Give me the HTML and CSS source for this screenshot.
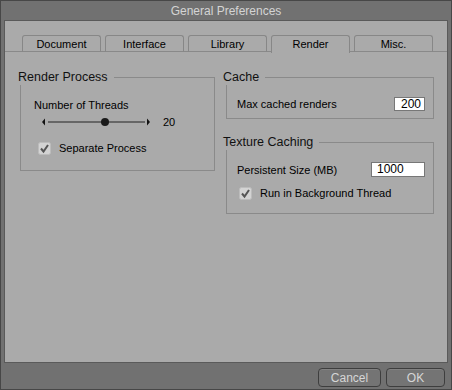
FILE: index.html
```html
<!DOCTYPE html>
<html lang="en">
<head>
    <meta charset="UTF-8">
    <title>General Preferences</title>
    <link rel="stylesheet" href="styles.css">
</head>
<body>
    <div class="window">
        <div class="titlebar">General Preferences</div>

        <div class="panel">
            <ul class="tabs">
                <li class="tab">Document</li>
                <li class="tab">Interface</li>
                <li class="tab">Library</li>
                <li class="tab active">Render</li>
                <li class="tab">Misc.</li>
            </ul>

            <div class="content">
                <!-- Left column -->
                <div class="column left">
                    <div class="group">
                        <div class="group-head">
                            <span class="group-title">Render Process</span>
                            <span class="group-rule"></span>
                        </div>
                        <div class="group-body threads">
                            <p class="label">Number of Threads</p>
                            <div class="slider-row">
                                <svg class="slider" width="112" height="10" viewBox="0 0 112 10">
                                    <polygon points="2,5 5,1.5 5,8.5" fill="#111"/>
                                    <line x1="8" y1="5" x2="105" y2="5" stroke="#222" stroke-width="1"/>
                                    <circle cx="65" cy="5" r="4" fill="#1a1a1a"/>
                                    <polygon points="110,5 107,1.5 107,8.5" fill="#111"/>
                                </svg>
                                <span class="slider-value">20</span>
                            </div>
                            <div class="check-row">
                                <svg class="check" width="13" height="13" viewBox="0 0 13 13">
                                    <rect x="0.5" y="0.5" width="12" height="12" rx="2" fill="#d3d3d3" stroke="#bcbcbc"/>
                                    <polyline points="3,6.5 5.5,9.5 10,3" fill="none" stroke="#555" stroke-width="2"/>
                                </svg>
                                <span class="label">Separate Process</span>
                            </div>
                        </div>
                    </div>
                </div>

                <!-- Right column -->
                <div class="column right">
                    <div class="group">
                        <div class="group-head">
                            <span class="group-title">Cache</span>
                            <span class="group-rule"></span>
                        </div>
                        <div class="group-body cache">
                            <div class="field-row">
                                <span class="label">Max cached renders</span>
                                <span class="field small">200</span>
                            </div>
                        </div>
                    </div>

                    <div class="group">
                        <div class="group-head">
                            <span class="group-title">Texture Caching</span>
                            <span class="group-rule"></span>
                        </div>
                        <div class="group-body texture">
                            <div class="field-row">
                                <span class="label">Persistent Size (MB)</span>
                                <span class="field wide">1000</span>
                            </div>
                            <div class="check-row">
                                <svg class="check" width="13" height="13" viewBox="0 0 13 13">
                                    <rect x="0.5" y="0.5" width="12" height="12" rx="2" fill="#d3d3d3" stroke="#bcbcbc"/>
                                    <polyline points="3,6.5 5.5,9.5 10,3" fill="none" stroke="#555" stroke-width="2"/>
                                </svg>
                                <span class="label">Run in Background Thread</span>
                            </div>
                        </div>
                    </div>
                </div>
            </div>
        </div>

        <div class="footer">
            <button class="btn cancel">Cancel</button>
            <button class="btn ok">OK</button>
        </div>
    </div>
</body>
</html>
```

FILE: styles.css
```css
/* Page */
body {
  margin: 0;
  background-color: #4b4b4b;
  font-family: "Liberation Sans", Arial, sans-serif;
}

/* Dialog frame */
.window {
  width: 452px;
  height: 390px;
  box-sizing: border-box;
  border: 1px solid #474747;
  background-color: #717171;
  display: flex;
  flex-direction: column;
}

.titlebar {
  height: 19px;
  line-height: 21px;
  text-align: center;
  font-size: 12px;
  color: #d4d4d4;
}

/* Light grey panel */
.panel {
  height: 343px;
  margin: 0 3px;
  box-sizing: border-box;
  border: 1px solid #5a5a5a;
  background-color: #aaaaaa;
}

/* Tabs */
.tabs {
  list-style-type: none;
  margin: 14px 0 0 0;
  padding: 0 0 0 17px;
  display: flex;
  gap: 4px;
  border-bottom: 1px solid #898989;
  height: 16px;
}

.tab {
  width: 77px;
  height: 16px;
  box-sizing: content-box;
  border: 1px solid #878787;
  border-bottom: none;
  border-radius: 3px 3px 0 0;
  text-align: center;
  font-size: 11px;
  line-height: 17px;
  color: #000;
}

.tab.active {
  height: 17px;
  background-color: #aaaaaa;
}

/* Two columns */
.content {
  display: flex;
  gap: 8px;
  padding: 17px 13px 0 13px;
}

.column.left {
  width: 197px;
}

.column.right {
  width: 211px;
  display: flex;
  flex-direction: column;
  gap: 15px;
}

/* Group boxes */
.group-head {
  display: flex;
  height: 16px;
}

.group-title {
  font-size: 12.5px;
  line-height: 16px;
  color: #111;
  padding-right: 6px;
}

.group-rule {
  flex: 1;
  margin-top: 8px;
  border-top: 1px solid #8a8a8a;
  border-right: 1px solid #8a8a8a;
}

.group-body {
  border: 1px solid #8a8a8a;
  border-top: none;
}

.left .group-body {
  margin-left: 2px;
}

.right .group-body {
  margin-left: 3px;
}

.label {
  margin: 0;
  font-size: 11px;
  line-height: 14px;
  color: #000;
}

/* Render Process */
.threads {
  padding: 13px 13px 15px 13px;
}

.slider-row {
  display: flex;
  align-items: center;
  margin-top: 3px;
  padding-left: 6px;
}

.slider {
  display: block;
}

.slider-value {
  margin-left: 11px;
  font-size: 11px;
  line-height: 14px;
}

.check-row {
  display: flex;
  align-items: center;
  gap: 8px;
  margin-top: 12px;
  padding-left: 4px;
}

.check {
  display: block;
}

/* Cache fields */
.cache {
  padding: 12px 8px 7px 10px;
}

.texture {
  padding: 12px 8px 13px 10px;
}

.texture .check-row {
  margin-top: 9px;
  padding-left: 2px;
}

.field-row {
  display: flex;
  align-items: center;
  justify-content: space-between;
}

.field {
  height: 14px;
  box-sizing: border-box;
  background-color: #fff;
  border: 1px solid #777;
  font-size: 12px;
  line-height: 12px;
  color: #000;
}

.field.small {
  width: 31px;
  text-align: right;
  padding-right: 3px;
}

.field.wide {
  width: 54px;
  height: 15px;
  padding-left: 5px;
  line-height: 13px;
}

/* Bottom buttons */
.footer {
  flex: 1;
  display: flex;
  justify-content: flex-end;
  align-items: flex-start;
  gap: 5px;
  padding: 5px 6px 0 0;
}

.btn {
  height: 19px;
  padding: 0;
  border: 1px solid #3e3e3e;
  border-radius: 4px;
  background-color: #747474;
  box-shadow: inset 0 1px 0 #828282;
  font-family: "Liberation Sans", Arial, sans-serif;
  font-size: 12px;
  color: #d6d6d6;
}

.btn.cancel {
  width: 63px;
}

.btn.ok {
  width: 59px;
}
```
